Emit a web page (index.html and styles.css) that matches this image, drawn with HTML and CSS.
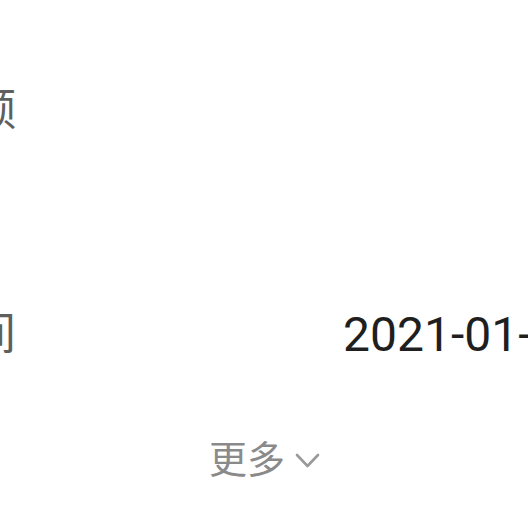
FILE: index.html
```html
<!DOCTYPE html>
<html lang="zh">
<head>
<meta charset="utf-8">
<link rel="stylesheet" href="styles.css">
</head>
<body>
<div class="page">
  <div class="row row-amount">
    <span class="label">金额</span>
    <span class="value"></span>
  </div>
  <div class="row row-time">
    <span class="label">时间</span>
    <span class="value">2021-01-01 12:00</span>
  </div>
  <div class="more">
    <span class="more-text">更多</span>
    <svg class="chev" width="26" height="16" viewBox="0 0 26 16"><polyline points="2,2 12.5,13 23,2" fill="none" stroke="#9a9a9a" stroke-width="2.6" stroke-linecap="round" stroke-linejoin="round"/></svg>
  </div>
</div>
</body>
</html>
```
FILE: styles.css
```css
html, body {
  margin: 0;
  padding: 0;
  background: #fff;
  overflow: hidden;
  width: 528px;
  height: 528px;
}
.page {
  font-family: Roboto, "Noto Sans CJK SC", sans-serif;
  padding-top: 86px;
  white-space: nowrap;
}
.row {
  display: flex;
  align-items: center;
  height: 50px;
}
.row-time {
  margin-top: 174px;
}
.label {
  width: 100px;
  margin-left: -84px;
  text-align: right;
  font-size: 45px;
  color: #5f5f5f;
  line-height: 50px;
  flex: none;
}
.value {
  margin-left: 327px;
  font-size: 48px;
  color: #1f1f1f;
  line-height: 50px;
  flex: none;
}
.more {
  margin-top: 75px;
  display: flex;
  align-items: center;
  padding-left: 209px;
  height: 50px;
}
.more-text {
  font-size: 38px;
  color: #8a8a8a;
  line-height: 50px;
}
.chev {
  margin-left: 10px;
  margin-top: 2px;
}
```
